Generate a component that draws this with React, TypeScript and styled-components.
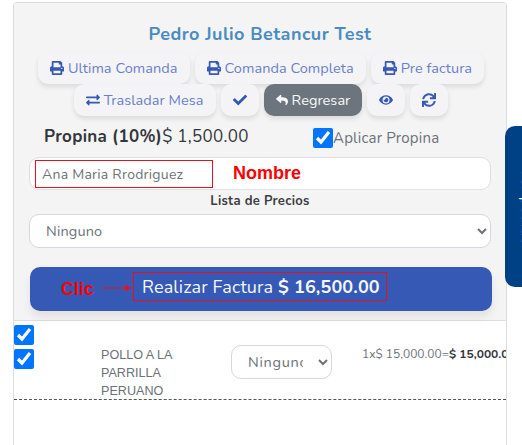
import React from "react";
import styled, {createGlobalStyle} from "styled-components";
import {FaCheck, FaExchangeAlt, FaEye, FaPrint, FaReply, FaSync} from "react-icons/fa";

const GlobalStyle = createGlobalStyle`
    html, body {
        margin: 0;
        padding: 0;
        background: #fff;
    }

    body {
        font-family: "Nunito", "Lato", "Open Sans", sans-serif;
    }
`;

const App = () => {
    return (<Page>
        <GlobalStyle/>
        <Card>
            <Header>
                <Title>Pedro Julio Betancur Test</Title>
                <Actions>
                    <ActionButton><FaPrint/> Ultima Comanda</ActionButton>
                    <ActionButton><FaPrint/> Comanda Completa</ActionButton>
                    <ActionButton><FaPrint/> Pre factura</ActionButton>
                    <ActionButton><FaExchangeAlt/> Trasladar Mesa</ActionButton>
                    <ActionButton $square><FaCheck/></ActionButton>
                    <ActionButton $dark><FaReply/> Regresar</ActionButton>
                    <ActionButton $square><FaEye/></ActionButton>
                    <ActionButton $square><FaSync/></ActionButton>
                </Actions>
                <TipRow>
                    <TipAmount><b>Propina (10%)</b>$ 1,500.00</TipAmount>
                    <TipToggle>
                        <Check type="checkbox" defaultChecked/>
                        Aplicar Propina
                    </TipToggle>
                </TipRow>
                <NameField>
                    <NameBox>Ana Maria Rrodriguez</NameBox>
                    <RedNote>Nombre</RedNote>
                </NameField>
                <FieldLabel>Lista de Precios</FieldLabel>
                <PriceSelect>
                    <option>Ninguno</option>
                </PriceSelect>
                <InvoiceButton>
                    <ClickNote>Clic</ClickNote>
                    <Arrow width="29" height="8" viewBox="0 0 29 8">
                        <path d="M0 4H24" stroke="#e8101c" strokeWidth="1"/>
                        <path d="M23 0.5L29 4L23 7.5Z" fill="#e8101c"/>
                    </Arrow>
                    <InvoiceLabel>Realizar Factura <b>$ 16,500.00</b></InvoiceLabel>
                </InvoiceButton>
            </Header>
            <ItemRow>
                <Checks>
                    <Check type="checkbox" defaultChecked/>
                    <Check type="checkbox" defaultChecked/>
                </Checks>
                <ItemName>POLLO A LA PARRILLA PERUANO</ItemName>
                <ItemSelect>
                    <option>Ninguno</option>
                </ItemSelect>
                <ItemPrice>1x$ 15,000.00=<b>$ 15,000.00</b></ItemPrice>
            </ItemRow>
        </Card>
        <SideTab><SideText>Ver pedido</SideText></SideTab>
    </Page>)
};

const Page = styled.div`
    position: relative;
    width: 522px;
    height: 445px;
    overflow: hidden;
    padding-top: 2px;
    box-sizing: border-box;
`;

const Card = styled.div`
    width: 494px;
    height: 460px;
    margin-left: 13px;
    box-sizing: border-box;
    border: 1px solid #dcdcdc;
    border-radius: 4px;
    background: #fff;
    overflow: hidden;
`;

const Header = styled.div`
    height: 318px;
    box-sizing: border-box;
    padding: 19px 15px 0 15px;
    background: #f4f4f5;
    border-bottom: 1px solid #dedede;
`;

const Title = styled.div`
    text-align: center;
    font-size: 18px;
    line-height: 24px;
    font-weight: 700;
    letter-spacing: 0.45px;
    color: #4a8cc2;
`;

const Actions = styled.div`
    display: flex;
    flex-wrap: wrap;
    justify-content: center;
    column-gap: 5px;
    margin: 6px -8px 0 -6px;
`;

const ActionButton = styled.button<{ $square?: boolean; $dark?: boolean }>`
    height: 32px;
    padding: ${({$square}) => $square ? "0" : "0 12px"};
    width: ${({$square}) => $square ? "38px" : "auto"};
    display: inline-flex;
    align-items: center;
    justify-content: center;
    gap: 4px;
    border: 0;
    border-radius: 10px;
    background: ${({$dark}) => $dark ? "#6c757d" : "#f4f4f6"};
    color: ${({$dark}) => $dark ? "#f8f9fa" : "#6a7fcb"};
    box-shadow: 0 3px 5px rgba(0, 0, 0, 0.1);
    font-family: inherit;
    font-size: 14.5px;
    letter-spacing: 0.05px;
    white-space: nowrap;

    svg {
        font-size: ${({$dark}) => $dark ? "12px" : "14px"};
        color: ${({$dark}) => $dark ? "#f8f9fa" : "#3659b5"};
    }
`;

const TipRow = styled.div`
    display: flex;
    align-items: center;
    margin-top: 7px;
    height: 26px;
    padding-left: 15px;
`;

const TipAmount = styled.div`
    width: 269px;
    font-size: 17px;
    letter-spacing: 0.3px;
    color: #33363a;

    b {
        font-weight: 700;
    }
`;

const TipToggle = styled.label`
    display: flex;
    align-items: flex-start;
    font-size: 15px;
    line-height: 20px;
    letter-spacing: 0.2px;
    color: #6c7178;
    margin-top: 3px;
`;

const Check = styled.input`
    width: 20px;
    height: 20px;
    margin: 0;
    flex-shrink: 0;
`;

const NameField = styled.div`
    height: 33px;
    margin-top: 8px;
    box-sizing: border-box;
    display: flex;
    align-items: center;
    gap: 20px;
    padding-left: 5px;
    background: #fff;
    border: 1px solid #dfdfe4;
    border-radius: 10px;
`;

const NameBox = styled.div`
    width: 178px;
    height: 28px;
    box-sizing: border-box;
    padding-left: 6px;
    border: 1px solid #e8101c;
    font-size: 14px;
    line-height: 27px;
    letter-spacing: 0.25px;
    color: #6c7178;
`;

const RedNote = styled.span`
    font-family: "Liberation Sans", Arial, sans-serif;
    font-size: 18px;
    font-weight: 700;
    color: #fe0000;
`;

const FieldLabel = styled.div`
    margin-top: 1px;
    text-align: center;
    font-size: 13px;
    line-height: 20px;
    font-weight: 700;
    letter-spacing: 0.3px;
    color: #3a3d42;
`;

const PriceSelect = styled.select`
    display: block;
    width: 100%;
    height: 34px;
    margin-top: 3px;
    padding: 0 12px;
    background-color: #fff;
    border: 1px solid #d5d7e2;
    border-radius: 10px;
    font-family: inherit;
    font-size: 14.5px;
    letter-spacing: 0.15px;
    color: #6c7178;
`;

const InvoiceButton = styled.div`
    height: 44px;
    width: 462px;
    margin: 19px 0 0 1px;
    box-sizing: border-box;
    display: flex;
    align-items: flex-start;
    padding: 5px 0 0 31px;
    background: #3659b5;
    border-radius: 10px;
    box-shadow: 0 6px 10px rgba(0, 0, 0, 0.08);
    color: #f4f6fb;
    font-size: 18px;
`;

const ClickNote = styled.span`
    width: 41px;
    margin-top: 7px;
    font-family: "Liberation Sans", Arial, sans-serif;
    font-size: 18px;
    line-height: 20px;
    font-weight: 700;
    color: #fe0000;
`;

const Arrow = styled.svg`
    margin: 12px 2px 0 0;
`;

const InvoiceLabel = styled.div`
    width: 254px;
    height: 29px;
    box-sizing: border-box;
    padding-left: 8px;
    border: 1px solid #e8101c;
    line-height: 29px;
    letter-spacing: 0.14px;
    white-space: nowrap;
`;

const ItemRow = styled.div`
    height: 79px;
    box-sizing: border-box;
    display: flex;
    align-items: flex-start;
    border-bottom: 1px dashed #555;
`;

const Checks = styled.div`
    display: flex;
    flex-direction: column;
    flex-shrink: 0;
    gap: 4px;
    padding-top: 4px;
    width: 87px;
`;

const ItemName = styled.div`
    flex-shrink: 0;
    width: 130px;
    padding: 25px 40px 0 0;
    box-sizing: border-box;
    font-family: "Liberation Sans", Arial, sans-serif;
    font-size: 12.6px;
    line-height: 18px;
    color: #6c7178;
`;

const ItemSelect = styled.select`
    flex-shrink: 0;
    width: 101px;
    height: 34px;
    margin-top: 24px;
    padding: 0 12px;
    background-color: #fff;
    border: 1px solid #d5d7e2;
    border-radius: 10px;
    font-family: inherit;
    font-size: 14.5px;
    letter-spacing: 0.7px;
    color: #6c7178;
`;

const ItemPrice = styled.div`
    flex-shrink: 0;
    margin: 24px 0 0 30px;
    font-size: 12px;
    line-height: 18px;
    white-space: nowrap;
    color: #6c7178;

    b {
        color: #33363a;
    }
`;

const SideTab = styled.div`
    position: absolute;
    left: 505px;
    top: 126px;
    width: 42px;
    height: 161px;
    display: flex;
    align-items: center;
    justify-content: center;
    background: #004085;
    border-radius: 10px 0 0 10px;
`;

const SideText = styled.span`
    writing-mode: vertical-rl;
    color: #fff;
    font-size: 14px;
    letter-spacing: 1px;
`;

export default App;
